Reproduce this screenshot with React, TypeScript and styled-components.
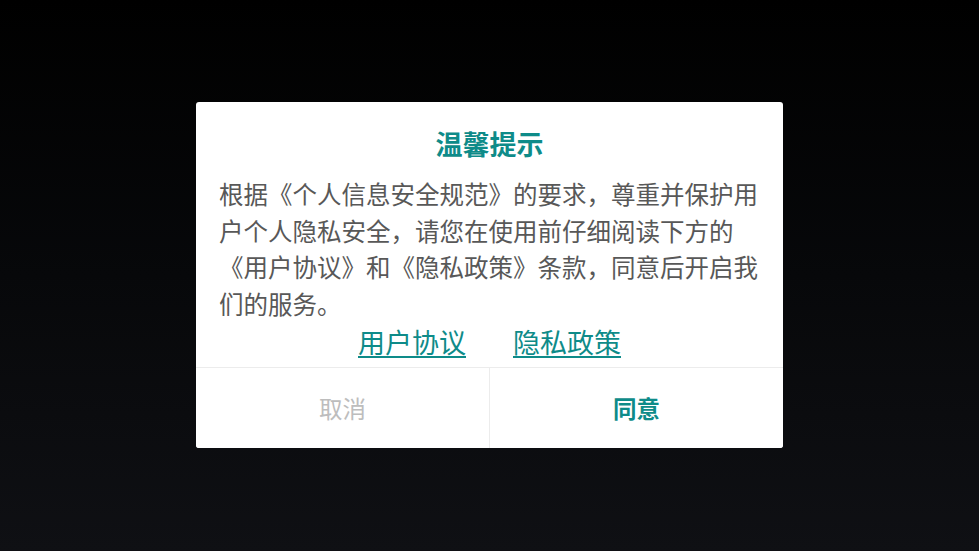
import React from 'react';
import styled, { createGlobalStyle } from 'styled-components';

const GlobalStyle = createGlobalStyle`
  html, body {
    margin: 0;
    padding: 0;
    height: 100%;
  }
  body {
    font-family: "Noto Sans CJK SC", "Noto Sans", sans-serif;
  }
  #root {
    height: 100%;
  }
`;

const teal = '#0e8b89';

const Screen = styled.div`
  width: 100%;
  height: 100%;
  min-height: 551px;
  background: linear-gradient(180deg, #000000 0%, #07080a 50%, #0f1014 100%);
  display: flex;
  align-items: flex-start;
  justify-content: center;
  padding-top: 102px;
  box-sizing: border-box;
`;

const Dialog = styled.div`
  width: 587px;
  height: 346px;
  background: #fff;
  border-radius: 3px;
  display: flex;
  flex-direction: column;
  overflow: hidden;
`;

const Title = styled.h2`
  margin: 24px 0 0;
  font-size: 27px;
  line-height: 36px;
  font-weight: 700;
  color: ${teal};
  text-align: center;
`;

const Body = styled.p`
  margin: 14px 0 0;
  padding: 0 23px;
  font-size: 24.5px;
  line-height: 36.7px;
  color: #585858;
  line-break: strict;
`;

const LinkRow = styled.div`
  display: flex;
  justify-content: center;
  gap: 47px;
  height: 36px;
  align-items: center;
  margin-top: 1px;
`;

const Link = styled.a`
  font-size: 27px;
  line-height: 36px;
  color: ${teal};
  text-decoration: underline;
  text-underline-offset: 3px;
  text-decoration-thickness: 1.5px;
  cursor: pointer;
`;

const Actions = styled.div`
  margin-top: auto;
  height: 80px;
  display: flex;
  border-top: 1px solid #ececec;
`;

const Action = styled.button<{ $primary?: boolean }>`
  flex: 1;
  border: none;
  background: #fff;
  font-family: inherit;
  font-size: 23.5px;
  font-weight: ${({ $primary }) => ($primary ? 700 : 400)};
  color: ${({ $primary }) => ($primary ? teal : '#bdbdbd')};
  cursor: pointer;
  padding: 0;
  &:first-child {
    border-right: 1px solid #ececec;
  }
`;

export default function App() {
  return (
    <>
      <GlobalStyle />
      <Screen>
        <Dialog>
          <Title>温馨提示</Title>
          <Body>
            根据《个人信息安全规范》的要求，尊重并保护用户个人隐私安全，请您在使用前仔细阅读下方的《用户协议》和《隐私政策》条款，同意后开启我们的服务。
          </Body>
          <LinkRow>
            <Link>用户协议</Link>
            <Link>隐私政策</Link>
          </LinkRow>
          <Actions>
            <Action>取消</Action>
            <Action $primary>同意</Action>
          </Actions>
        </Dialog>
      </Screen>
    </>
  );
}
